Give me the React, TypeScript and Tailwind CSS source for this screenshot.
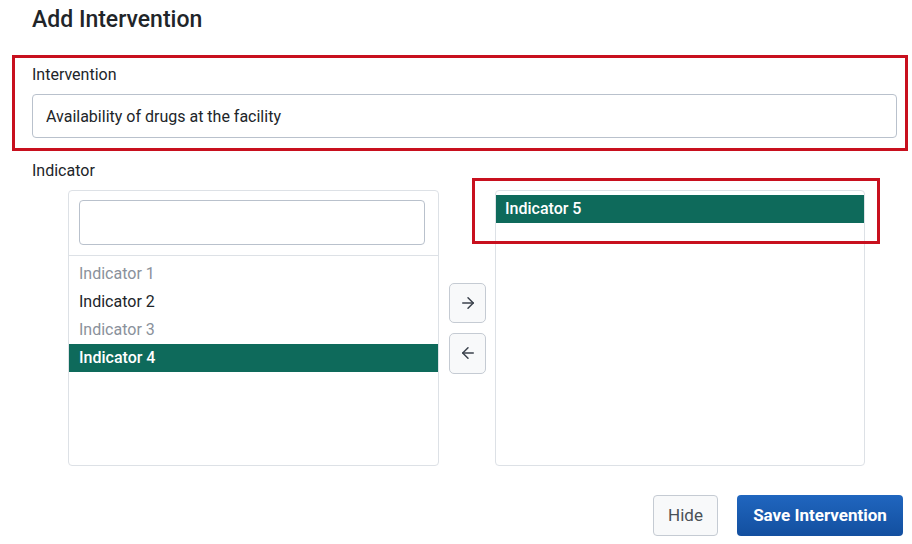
import React, { useState } from "react";
import { ArrowLeft, ArrowRight } from "lucide-react";

const leftItems = [
  { label: "Indicator 1", disabled: true },
  { label: "Indicator 2", disabled: false },
  { label: "Indicator 3", disabled: true },
  { label: "Indicator 4", disabled: false },
];

const App = () => {
  const [selected, setSelected] = useState("Indicator 4");

  return (
    <div className="relative h-[544px] w-[912px] overflow-hidden bg-white font-['Roboto','Liberation_Sans',sans-serif] text-[#212529]">
      <h1 className="pl-8 pt-[6px] text-[23px] leading-[28px] font-medium">Add Intervention</h1>

      <div className="mt-[21px] mr-[4px] ml-[12px] border-[3px] border-[#c8101e] pt-[7px] pr-[8px] pb-[10px] pl-[17px]">
        <label className="block text-[16px] leading-5">Intervention</label>
        <input
          className="mt-[9px] block h-[44px] w-full rounded border border-[#b9c1cc] px-[13px] text-[16px] text-[#212529] outline-none"
          defaultValue="Availability of drugs at the facility"
        />
      </div>

      <div className="pl-8 pt-[10px] text-[16px] leading-5">Indicator</div>

      <div className="mt-[9px] ml-[68px] flex items-center">
        <div className="flex h-[276px] w-[371px] flex-col rounded border border-[#dde1e6]">
          <div className="border-b border-[#dde1e6] pt-[9px] pr-[13px] pb-[10px] pl-[10px]">
            <input className="block h-[45px] w-full rounded border border-[#b9c1cc] px-2 outline-none" />
          </div>
          <ul className="pt-1">
            {leftItems.map((item) => (
              <li
                key={item.label}
                onClick={() => !item.disabled && setSelected(item.label)}
                className={`h-[28px] pl-[10px] text-[16px] leading-[28px] ${
                  selected === item.label
                    ? "bg-[#0e6a5b] font-medium text-white"
                    : item.disabled
                    ? "text-[#8a919b]"
                    : "text-[#212529]"
                }`}
              >
                {item.label}
              </li>
            ))}
          </ul>
        </div>

        <div className="mr-[9px] ml-[10px] flex flex-col gap-[10px]">
          <button className="flex h-[40px] w-[37px] items-center justify-center rounded-[5px] border border-[#c5cbd3] bg-[#f8f9fa] text-[#3b424c]">
            <ArrowRight size={18} strokeWidth={2} />
          </button>
          <button className="flex h-[41px] w-[37px] items-center justify-center rounded-[5px] border border-[#c5cbd3] bg-[#f8f9fa] text-[#3b424c]">
            <ArrowLeft size={18} strokeWidth={2} />
          </button>
        </div>

        <div className="h-[276px] w-[370px] rounded border border-[#dde1e6] pt-1">
          <div className="h-[28px] bg-[#0e6a5b] pl-[9px] text-[16px] leading-[28px] font-medium text-white">
            Indicator 5
          </div>
        </div>
      </div>

      <div className="mt-[29px] mr-[9px] flex justify-end gap-[19px]">
        <button className="h-[41px] w-[65px] rounded border border-[#c5cbd3] bg-[#f8f9fa] text-[17px] text-[#495057]">
          Hide
        </button>
        <button className="h-[41px] w-[166px] rounded bg-gradient-to-b from-[#2066bf] to-[#134f9f] text-[17px] font-bold text-white">
          Save Intervention
        </button>
      </div>

      <div className="pointer-events-none absolute top-[178px] left-[472px] h-[66px] w-[408px] border-[3px] border-[#c8101e]" />
    </div>
  );
};

export default App;
